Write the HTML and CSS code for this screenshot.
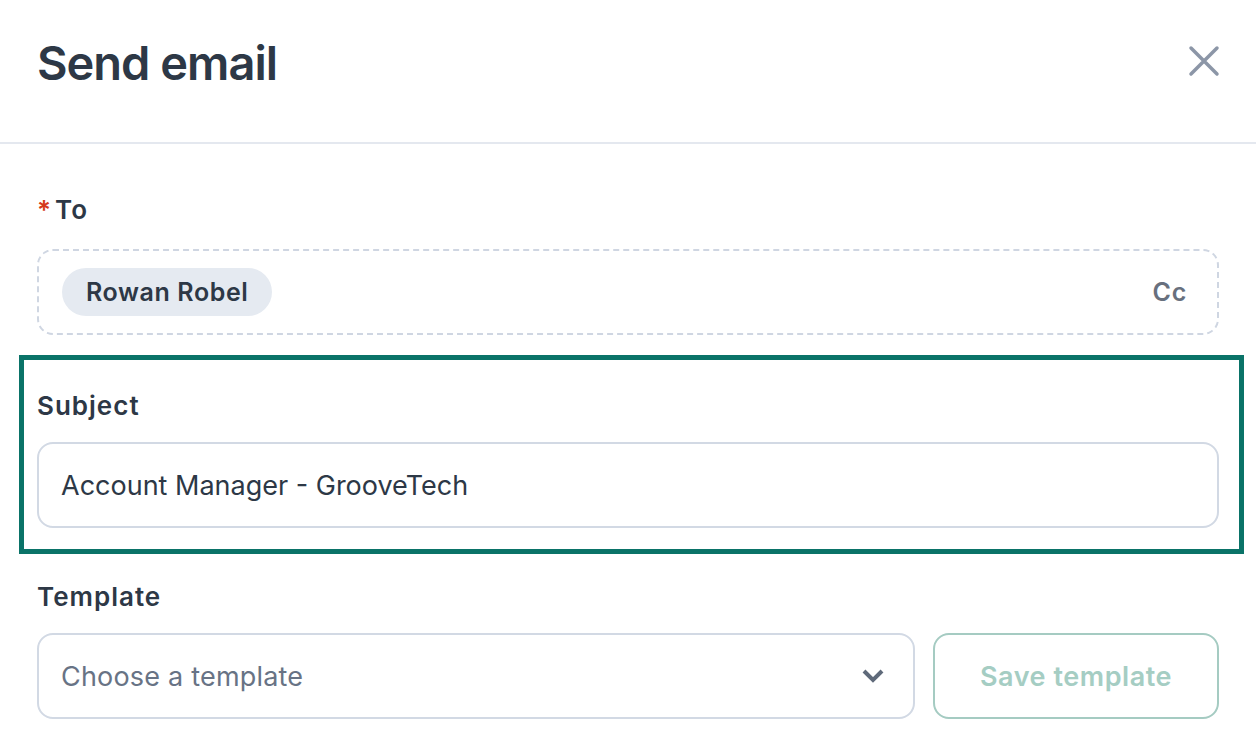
FILE: index.html
```html
<!DOCTYPE html>
<html lang="en">
<head>
<meta charset="utf-8">
<title>Send email</title>
<link rel="stylesheet" href="styles.css">
</head>
<body>
<div class="modal">
  <header class="modal-header">
    <h1 class="title">Send email</h1>
    <button class="close" aria-label="Close">
      <svg width="32" height="32" viewBox="0 0 32 32"><path d="M3 3 L29 29 M29 3 L3 29" stroke="#8c96a7" stroke-width="3.5" stroke-linecap="round" fill="none"/></svg>
    </button>
  </header>
  <div class="modal-body">
    <div class="field">
      <label class="label label-to"><span class="req">*</span>To</label>
      <div class="recipients">
        <span class="chip">Rowan Robel</span>
        <span class="cc">Cc</span>
      </div>
    </div>
    <div class="highlight">
      <div class="field">
        <label class="label">Subject</label>
        <div class="input">Account Manager - GrooveTech</div>
      </div>
    </div>
    <div class="field field-template">
      <label class="label">Template</label>
      <div class="template-row">
        <div class="input select">
          <span class="placeholder">Choose a template</span>
          <svg class="chevron" width="24" height="16" viewBox="0 0 24 16"><path d="M3 3 L12 12 L21 3" stroke="#5f6a7a" stroke-width="4" fill="none"/></svg>
        </div>
        <button class="save">Save template</button>
      </div>
    </div>
  </div>
</div>
</body>
</html>
```

FILE: styles.css
```css
* { box-sizing: border-box; }
html, body { margin: 0; padding: 0; background: #ffffff; }
body {
  font-family: Inter, "Noto Sans", "Liberation Sans", sans-serif;
  color: #2d3748;
  width: 1256px;
  height: 748px;
  overflow: hidden;
}
.modal-header {
  height: 144px;
  border-bottom: 2px solid #e4e8ef;
  padding: 34px 36px 0 37px;
  display: flex;
  justify-content: space-between;
  align-items: flex-start;
}
.title {
  margin: 0;
  font-size: 47px;
  line-height: 58px;
  font-weight: 600;
  color: #2d3846;
  letter-spacing: -1px;
}
.close {
  border: 0;
  background: none;
  padding: 0;
  margin-top: 11px;
  width: 32px;
  height: 32px;
  display: flex;
}
.modal-body {
  padding: 50px 37px 0 37px;
}
.label {
  display: block;
  font-size: 26px;
  line-height: 32px;
  font-weight: 600;
  letter-spacing: 1px;
  color: #2d3846;
  margin-bottom: 20px;
}
.label-to { margin-bottom: 23px; }
.req {
  color: #d5381c;
  margin-right: 3px;
  font-weight: 600;
}
.recipients {
  height: 86px;
  border: 2px dashed #cfd6e2;
  border-radius: 16px;
  display: flex;
  align-items: center;
  justify-content: space-between;
  padding: 0 30px 0 23px;
}
.chip {
  height: 48px;
  border-radius: 24px;
  background: #e5eaf1;
  padding: 0 24px;
  display: flex;
  align-items: center;
  font-size: 25px;
  letter-spacing: 0.6px;
  font-weight: 600;
  color: #2d3846;
}
.cc {
  font-size: 25px;
  letter-spacing: 0.8px;
  font-weight: 600;
  color: #68707e;
}
.highlight {
  margin: 20px -25px 0 -18px;
  border: 5px solid #0a7368;
  padding: 30px 20px 21px 13px;
}
.input {
  height: 86px;
  border: 2px solid #d2d9e4;
  border-radius: 16px;
  display: flex;
  align-items: center;
  padding: 0 22px;
  font-size: 27px;
  color: #2d3846;
}
.field-template { margin-top: 27px; }
.template-row {
  display: flex;
  gap: 18px;
}
.select {
  flex: 1;
  justify-content: space-between;
  padding-right: 28px;
}
.placeholder { color: #687385; letter-spacing: 0.2px; }
.chevron { display: block; }
.save {
  width: 286px;
  height: 86px;
  border: 2px solid #a5cbc2;
  border-radius: 16px;
  background: #ffffff;
  font-family: inherit;
  font-size: 27px;
  letter-spacing: 0.55px;
  font-weight: 600;
  color: #a5cdc3;
}
```
